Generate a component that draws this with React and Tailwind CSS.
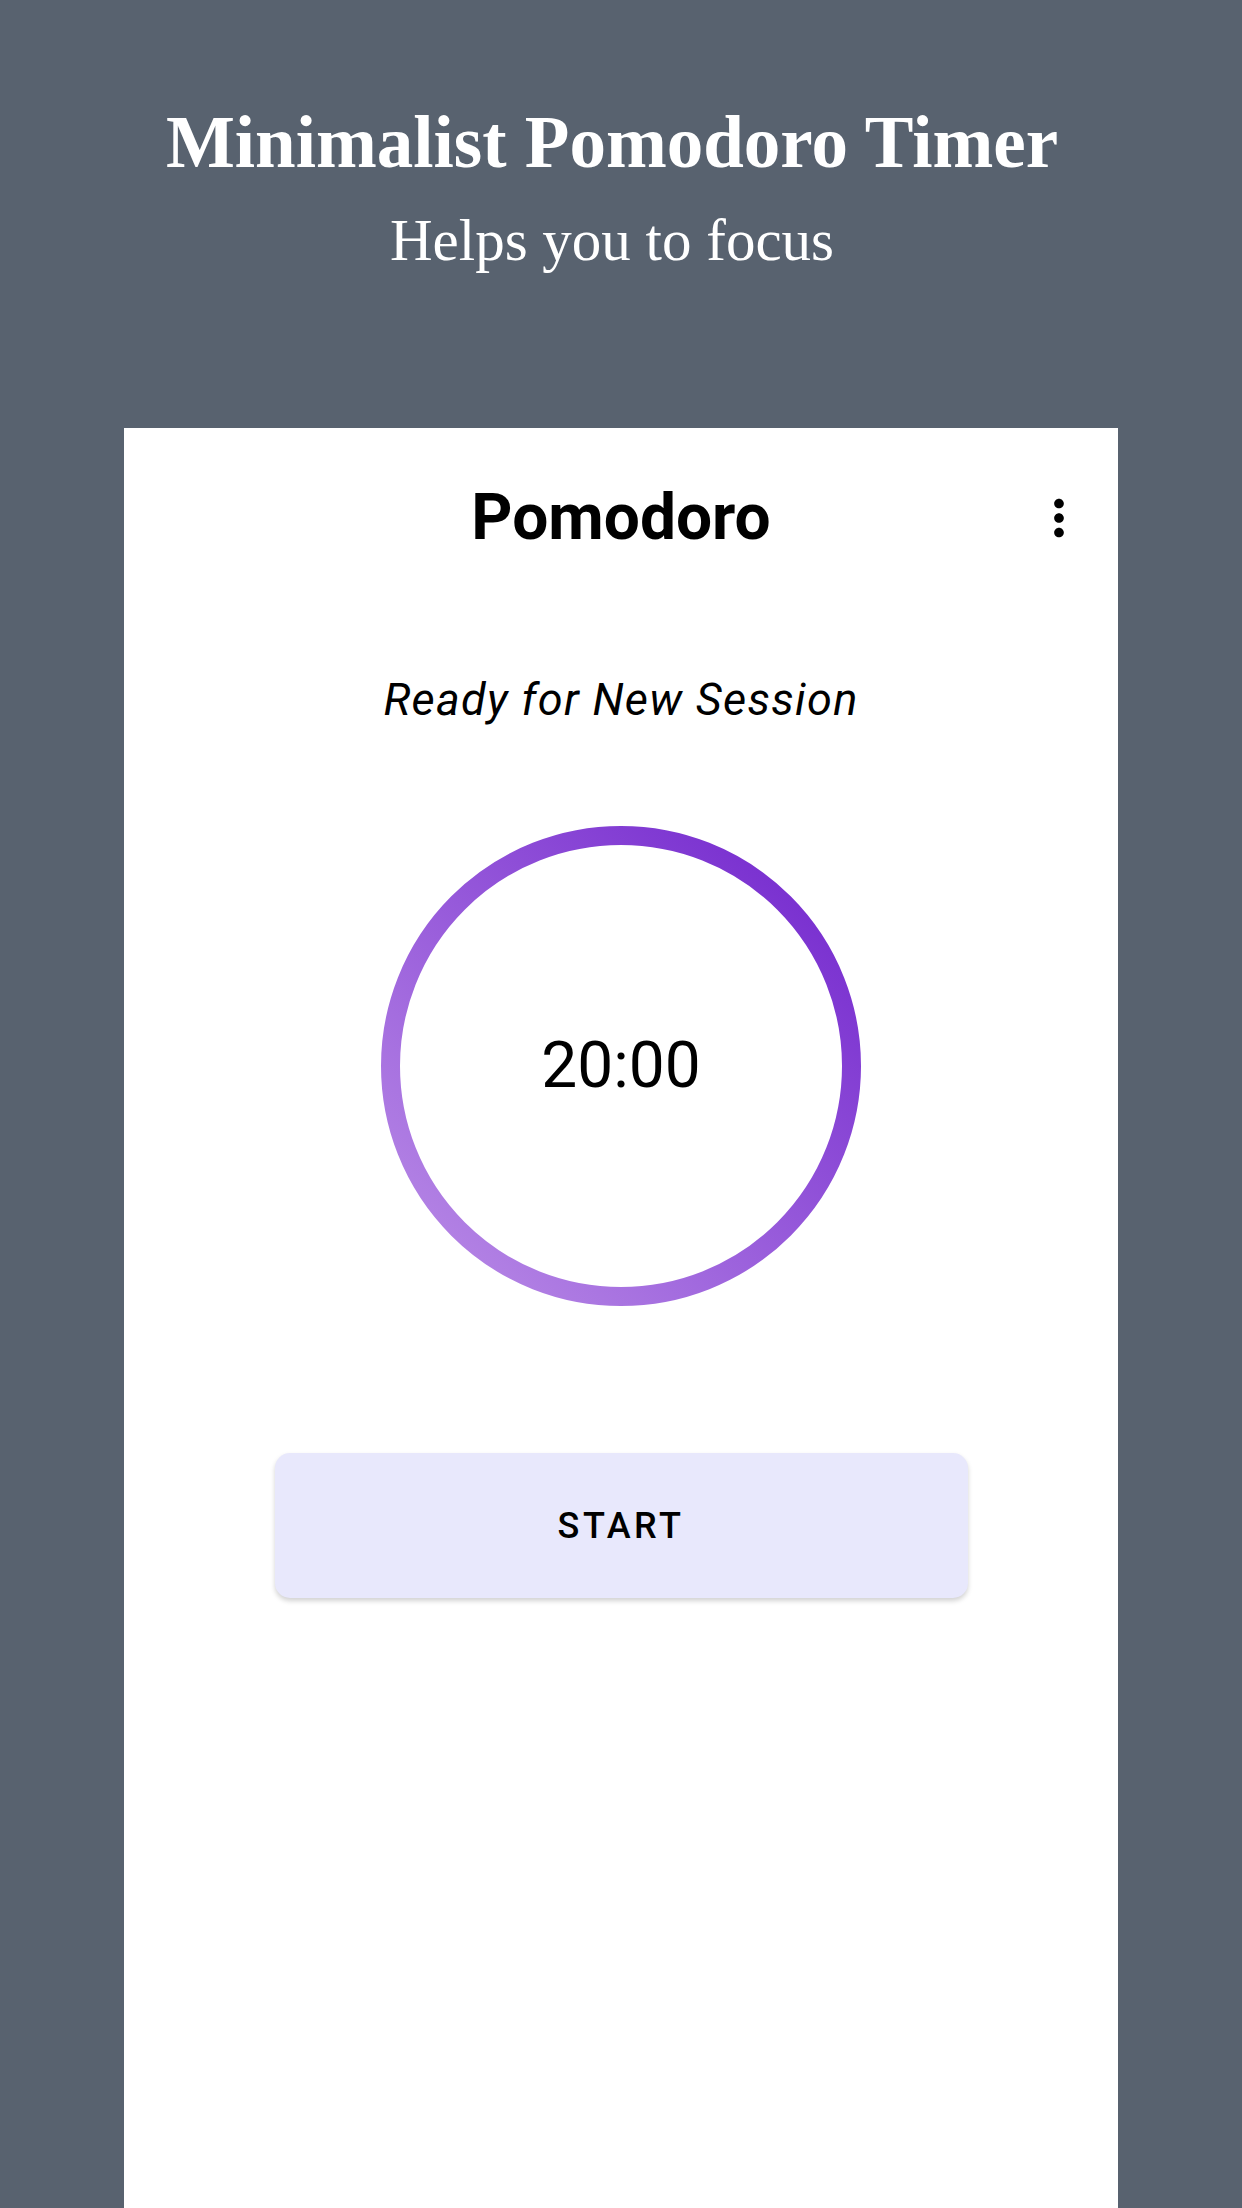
import React from 'react';

const MoreVert = () => (
  <svg viewBox="0 0 24 24" className="w-[58px] h-[58px]" fill="#000">
    <path d="M12 8c1.1 0 2-.9 2-2s-.9-2-2-2-2 .9-2 2 .9 2 2 2zm0 2c-1.1 0-2 .9-2 2s.9 2 2 2 2-.9 2-2-.9-2-2-2zm0 6c-1.1 0-2 .9-2 2s.9 2 2 2 2-.9 2-2-.9-2-2-2z" />
  </svg>
);

const TimerRing = ({ time }) => (
  <div className="relative w-[480px] h-[480px] flex items-center justify-center">
    <svg viewBox="0 0 480 480" className="absolute inset-0 w-full h-full">
      <defs>
        <linearGradient id="ring" x1="1" y1="0" x2="0" y2="1">
          <stop offset="0" stopColor="#7124cd" />
          <stop offset="1" stopColor="#bb8ee7" />
        </linearGradient>
      </defs>
      <circle cx="240" cy="240" r="230.5" fill="none" stroke="url(#ring)" strokeWidth="19" />
    </svg>
    <span className="relative text-[64px] leading-none text-black font-['Roboto',sans-serif]">{time}</span>
  </div>
);

const App = () => {
  return (
    <div className="min-h-screen bg-[#58626f] flex flex-col">
      <div className="pt-[106px] pr-[18px] text-center text-white font-['Liberation_Serif','Times_New_Roman',serif]">
        <h1 className="text-[73px] leading-none font-bold">Minimalist Pomodoro Timer</h1>
        <p className="mt-[32px] text-[59px] leading-none">Helps you to focus</p>
      </div>

      <div className="mt-[158px] mx-auto w-[994px] flex-1 bg-white flex flex-col items-center font-['Roboto',sans-serif] text-black">
        <div className="w-full pt-[58px] grid grid-cols-[1fr_auto_1fr] items-center">
          <div />
          <h2 className="text-[64px] leading-none font-bold">Pomodoro</h2>
          <div className="justify-self-end pr-[30px] flex">
            <MoreVert />
          </div>
        </div>

        <p className="mt-[127px] text-[45px] leading-none italic tracking-[1.3px]">Ready for New Session</p>

        <div className="mt-[104px]">
          <TimerRing time="20:00" />
        </div>

        <button className="mt-[147px] w-[693px] h-[145px] rounded-[15px] bg-[#e8e8fc] shadow-[0_3px_5px_rgba(0,0,0,0.18)] text-[36px] font-medium tracking-[3.5px] text-black">
          START
        </button>
      </div>
    </div>
  );
};

export default App;
